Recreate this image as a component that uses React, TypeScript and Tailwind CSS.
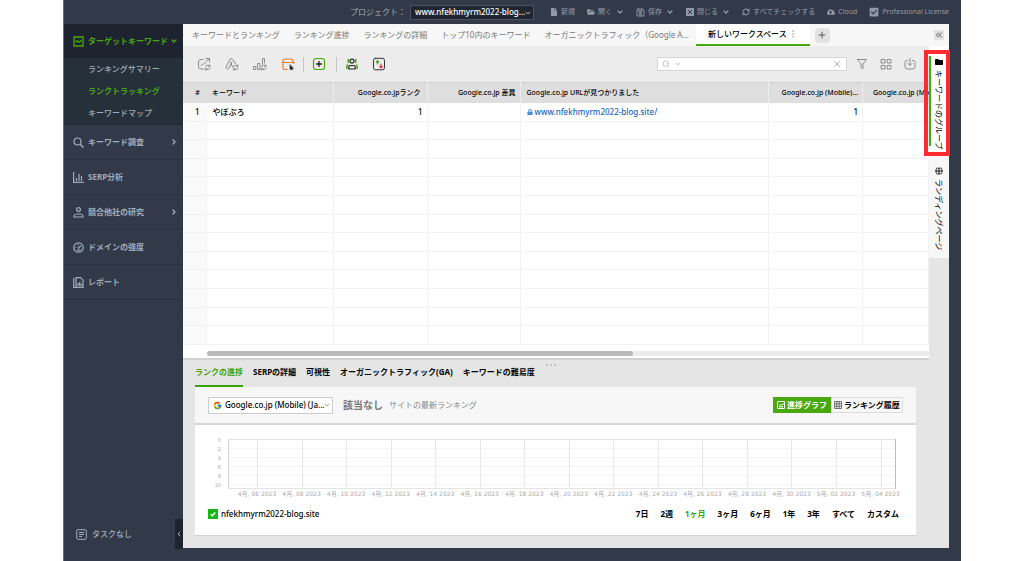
import type { ReactNode } from 'react';
import clsx from 'clsx';
import {
  FaCheckSquare,
  FaCloudUploadAlt,
  FaFile,
  FaFolder,
  FaFolderOpen,
  FaGlobe,
  FaLock,
  FaRegSave,
} from 'react-icons/fa';
import { FcGoogle } from 'react-icons/fc';
import {
  ChevronDown,
  ChevronLeft,
  ChevronRight,
  ChevronsLeft,
  EllipsisVertical,
  Plus,
  RefreshCw,
  Search,
  X,
} from 'lucide-react';

const workspaceTabs = [
  'キーワードとランキング',
  'ランキング進捗',
  'ランキングの詳細',
  'トップ10内のキーワード',
  'オーガニックトラフィック（Google A...',
];

const subItems = ['ランキングサマリー', 'ランクトラッキング', 'キーワードマップ'];

const detailTabs = [
  'ランクの進捗',
  'SERPの詳細',
  '可視性',
  'オーガニックトラフィック(GA)',
  'キーワードの難易度',
];

const periods = ['7日', '2週', '1ヶ月', '3ヶ月', '6ヶ月', '1年', '3年', 'すべて', 'カスタム'];

const chartDates = [
  '4月, 06 2023',
  '4月, 08 2023',
  '4月, 10 2023',
  '4月, 12 2023',
  '4月, 14 2023',
  '4月, 16 2023',
  '4月, 18 2023',
  '4月, 20 2023',
  '4月, 22 2023',
  '4月, 24 2023',
  '4月, 26 2023',
  '4月, 28 2023',
  '4月, 30 2023',
  '5月, 02 2023',
  '5月, 04 2023',
];

const emptyRows = Array.from({ length: 12 }, (_, i) => i);

export default function App() {
  return (
    <div className="min-h-screen bg-white px-[63px] font-['Noto_Sans','Noto_Sans_CJK_JP',sans-serif] text-[8px] leading-3 text-black">
      <div className="flex min-h-screen flex-col border-l border-[#68707c] bg-[#323a49]">
        <TopBar />
        <div className="flex flex-1 pr-3">
          <Sidebar />
          <div className="mb-[13px] flex min-w-0 flex-1 flex-col bg-[#e5e5e5]">
            <WorkspaceTabs />
            <div className="flex flex-1">
              <main className="flex min-w-0 flex-1 flex-col">
                <Toolbar />
                <KeywordTable />
                <DetailPanel />
              </main>
              <Rail />
            </div>
          </div>
        </div>
      </div>
    </div>
  );
}

const TopBar = () => {
  return (
    <header className="flex h-6 items-center justify-end gap-3 pr-3 text-[7px] whitespace-nowrap text-[#929aa7]">
      <div className="mr-1 flex items-center gap-1">
        <label htmlFor="project" className="text-[8px] text-[#a9b0bb]">
          プロジェクト：
        </label>
        <div className="relative w-31">
          <select
            id="project"
            className="block h-[15px] w-full appearance-none border border-[#4a5361] bg-[#1f2632] pl-1 text-[8px] leading-3 font-medium text-white"
          >
            <option>www.nfekhmyrm2022-blog...</option>
          </select>
          <ChevronDown className="pointer-events-none absolute top-1 right-0.5 size-2 text-white" />
        </div>
      </div>
      <MenuButton icon={<FaFile className="size-2" />} label="新規" />
      <MenuButton icon={<FaFolderOpen className="size-2" />} label="開く" hasMenu />
      <MenuButton icon={<FaRegSave className="size-[9px]" />} label="保存" hasMenu />
      <MenuButton
        icon={
          <svg viewBox="0 0 8 8" className="size-2" fill="none" stroke="currentColor">
            <path d="M0 0h8v8h-8z" fill="currentColor" stroke="none" />
            <path d="M2 2l4 4M6 2l-4 4" stroke="#323a49" />
          </svg>
        }
        label="閉じる"
        hasMenu
      />
      <MenuButton
        icon={<RefreshCw className="size-2" strokeWidth={3} />}
        label="すべてチェックする"
      />
      <MenuButton icon={<FaCloudUploadAlt className="size-2" />} label="Cloud" />
      <MenuButton icon={<FaCheckSquare className="size-2.5" />} label="Professional License" />
    </header>
  );
};

const MenuButton = (props: { icon: ReactNode; label: string; hasMenu?: boolean }) => {
  return (
    <button type="button" className="flex items-center">
      {props.icon}
      <span className="ml-[3px]">{props.label}</span>
      {props.hasMenu && <ChevronDown className="ml-1 size-2" strokeWidth={4} />}
    </button>
  );
};

const Sidebar = () => {
  return (
    <nav className="flex w-[119px] shrink-0 flex-col font-medium text-[#a3adba]">
      <a href="#target" className="flex h-[34px] items-center bg-[#1d232f] pl-[9px] text-[#4aa80f]">
        <svg viewBox="0 0 11 11" className="size-[11px]" fill="none" stroke="currentColor" strokeWidth="1.300">
          <path d="M1 1h9v9h-9z" />
          <path d="M2.500 6.200l1.500-1.500 2 1.500 2.500-1.800" />
        </svg>
        <span className="ml-1 font-bold">ターゲットキーワード</span>
        <ChevronDown className="ml-0.5 size-2" strokeWidth={4} />
      </a>
      <ul className="border-b border-[#1f2731] bg-[#26303b]">
        {subItems.map((item, i) => (
          <li key={item}>
            <a
              href="#sub"
              className={clsx('flex h-[22px] items-center pl-6', i === 1 && 'font-bold text-[#4aa80f]')}
            >
              {item}
            </a>
          </li>
        ))}
      </ul>
      <SideItem label="キーワード調査" hasMenu>
        <circle cx="4.500" cy="4.500" r="3.500" />
        <path d="M7 7l3.500 3.500" strokeWidth="1.500" />
      </SideItem>
      <SideItem label="SERP分析">
        <path d="M.600 0v10.400h10.400M3.500 6v3M6 2v7M8.500 4v5" />
      </SideItem>
      <SideItem label="競合他社の研究" hasMenu>
        <circle cx="5.500" cy="2.500" r="1.900" />
        <path d="M1 10v-1q.300-2 2.500-2h4q2.200 0 2.500 2v1z" />
      </SideItem>
      <SideItem label="ドメインの強度">
        <circle cx="5.500" cy="5.500" r="4.700" />
        <path d="M5 6.500l3-2.800M2.500 5.500h1M5 2.500v1M4 8.200h3.500" />
      </SideItem>
      <SideItem label="レポート">
        <path d="M.700 1v9.300h2M3 .700h4.500l2.500 2.500v7.100h-7zM5 6v3M6.700 5v4M8.300 6.500v2.500" />
      </SideItem>
      <div className="mt-auto mb-3 flex h-[30px] items-center justify-between pl-3">
        <a href="#tasks" className="flex items-center gap-[5px]">
          <svg viewBox="0 0 11 11" className="size-[11px]" fill="none" stroke="currentColor">
            <rect x=".700" y=".700" width="9.600" height="9.600" rx="1" />
            <path d="M3 3.500h5M3 5.500h5M3 7.500h3" />
          </svg>
          タスクなし
        </a>
        <button
          type="button"
          aria-label="collapse"
          className="flex h-full w-2 items-center justify-center bg-[#1d232f]"
        >
          <ChevronLeft className="size-2" strokeWidth={3} />
        </button>
      </div>
    </nav>
  );
};

const SideItem = (props: { label: string; hasMenu?: boolean; children: ReactNode }) => {
  return (
    <a href="#item" className="flex h-[35px] items-center border-b border-[#2a323f] pr-[5px] pl-[9px]">
      <svg viewBox="0 0 11 11" className="size-[11px]" fill="none" stroke="currentColor" strokeWidth="1.200">
        {props.children}
      </svg>
      <span className="ml-1 font-bold">{props.label}</span>
      {props.hasMenu && <ChevronRight className="ml-auto size-2" strokeWidth={4} />}
    </a>
  );
};

const WorkspaceTabs = () => {
  return (
    <div className="flex h-[22px] items-stretch bg-[#f7f7f7] pl-[9px] whitespace-nowrap text-[#777]">
      <div className="flex gap-3.5">
        {workspaceTabs.map((tab) => (
          <button key={tab} type="button">
            {tab}
          </button>
        ))}
      </div>
      <button
        type="button"
        className="ml-[7px] flex w-[114px] items-center border-b-2 border-[#4aa80f] bg-white pl-3 font-medium text-black"
      >
        新しいワークスペース
        <EllipsisVertical className="ml-px size-2.5 text-[#aaa]" />
      </button>
      <button
        type="button"
        aria-label="add workspace"
        className="ml-[5px] flex size-[15px] items-center justify-center self-center rounded-sm bg-[#e2e2e2] text-[#444]"
      >
        <Plus className="size-2.5" />
      </button>
      <button
        type="button"
        aria-label="hide panel"
        className="mr-[5px] ml-auto flex size-2.5 items-center justify-center self-center bg-[#e2e2e2] text-[#333]"
      >
        <ChevronsLeft className="size-2.5" />
      </button>
    </div>
  );
};

const ToolIcon = (props: { label: string; color?: string; children: ReactNode }) => {
  return (
    <button type="button" aria-label={props.label} className={props.color ?? 'text-[#8c8c8c]'}>
      <svg
        viewBox="0 0 14 14"
        className="size-3.5"
        fill="none"
        stroke="currentColor"
        strokeLinecap="round"
        strokeLinejoin="round"
      >
        {props.children}
      </svg>
    </button>
  );
};

// small recheck arrows in the corner of the first three tools
const Recheck = () => (
  <path d="M8.500 9.800a2.300 2.300 0 0 1 4-.800M12.900 7.800v1.600h-1.600M13 11a2.300 2.300 0 0 1-4 .900M8.500 13.200v-1.500h1.600" />
);

const Toolbar = () => {
  return (
    <div className="flex h-9 items-center bg-[#ececec] pr-3 pl-3.5 text-[#888]">
      <div className="flex gap-3.5">
        <ToolIcon label="check ranking">
          <path d="M6 2.500h-2q-2.500 0-2.500 2.500v4.500q0 2.500 2.500 2.500h2.500M4 8.500q1-1.500 2.500-1.500t2-1.500 3.500-3.500M9 1.500h3.500v3.500" />
          <Recheck />
        </ToolIcon>
        <ToolIcon label="check visibility">
          <path d="M6.500 1.500q-1.500 0-2 1.500l-3.500 7q0 1.500 1.500 2 1 0 1.500-1l3-6M6.500 1.500q1 0 1.500 1.200l2.500 4M5.500 5l2 5" />
          <Recheck />
        </ToolIcon>
        <ToolIcon label="check difficulty">
          <path d="M.800 9.500h2v3h-2zM5 6.500h2v6h-2zM9.500 7v-5.500h2v4.500" />
          <Recheck />
        </ToolIcon>
        <ToolIcon label="schedule" color="text-[#f57c1f]">
          <path
            d="M6.500 12.500h-2.500q-2 0-2-2v-4M2 4.500v-.500q0-2 2-2h6q2 0 2 2v.500M.800 5.500h12.400M12.500 5.500v1"
            strokeWidth="1.200"
          />
          <path
            d="M9 8v4.500l1-.800.700 1.300.900-.500-.700-1.300h1.300z"
            fill="#222"
            stroke="#222"
            strokeWidth=".600"
          />
        </ToolIcon>
      </div>
      <span className="mx-2 h-[15px] w-px bg-[#c4c4c4]" />
      <ToolIcon label="add" color="text-[#4aa80f]">
        <rect x="1.500" y="1.500" width="11" height="11" rx="2.500" strokeWidth="1.200" />
        <path d="M7 4.500v5M4.500 7h5" stroke="#222" strokeWidth="1.300" />
      </ToolIcon>
      <span className="mr-2 ml-2.5 h-[15px] w-px bg-[#c4c4c4]" />
      <div className="flex gap-[13px]">
        <ToolIcon label="competitors" color="text-[#4aa80f]">
          <path
            d="M3.200 2.500v3M10.800 2.500v3M1.800 11.500v-2q0-1 1-1.500M12.200 11.500v-2q0-1-1-1.500"
            strokeWidth="1.500"
          />
          <circle cx="7" cy="4.200" r="2" stroke="#222" strokeWidth="1.200" />
          <path d="M3.800 12v-1.500q0-2 2-2h2.400q2 0 2 2v1.500z" stroke="#222" strokeWidth="1.200" />
        </ToolIcon>
        <ToolIcon label="move" color="text-[#333]">
          <rect x="1.500" y="1.300" width="11" height="11.500" rx="2" />
          <path d="M5.500 7v-3M4.300 5l1.200-1.300 1.200 1.300" stroke="#4aa80f" strokeWidth="1.200" />
          <path d="M9 7v3.500M7.700 9.500l1.300 1.300 1.300-1.300" stroke="#e33" strokeWidth="1.200" />
        </ToolIcon>
      </div>
      <div className="mr-2 ml-auto flex h-3.5 w-[190px] items-center border border-[#d6d6d6] bg-white px-1 text-[#aaa]">
        <Search className="size-2" />
        <ChevronDown className="ml-1 size-2" />
        <input type="search" aria-label="search" className="min-w-0 flex-1 outline-none" />
        <X className="size-2.5" />
      </div>
      <div className="flex items-center gap-2.5">
        <ToolIcon label="filter">
          <path d="M2.500 2.500h9l-3.500 4.500v4.500l-2 -1v-3.500z" />
        </ToolIcon>
        <ToolIcon label="columns">
          <path d="M2.500 2.500h3.500v3.500h-3.500zM8.500 2.500h3.500v3.500h-3.500zM2.500 8.500h3.500v3.500h-3.500zM8.500 8.500h3.500v3.500h-3.500z" />
        </ToolIcon>
        <ToolIcon label="export">
          <path d="M4.500 3.500h-.500q-2 0-2 2v4q0 2.500 2.500 2.500h5q2.500 0 2.500-2.500v-4q0-2-2-2h-.500M7 1.500v6.500M5 6.500l2 2 2-2" />
        </ToolIcon>
      </div>
    </div>
  );
};

const KeywordTable = () => {
  return (
    <section className="border-b-2 border-[#d2d2d2] bg-white">
      <table className="h-[263px] w-full table-fixed border-collapse whitespace-nowrap">
        <colgroup>
          <col className="w-[23px]" />
          <col className="w-[127px]" />
          <col className="w-[94px]" />
          <col className="w-[93px]" />
          <col />
          <col className="w-[94px]" />
          <col className="w-[66px]" />
        </colgroup>
        <thead>
          <tr className="h-5 border-t border-[#d0d0d0] bg-[#dedede] text-[7px] *:font-medium">
            <th className="pl-1.5">#</th>
            <th className="border-r border-[#eee] pl-1.5 text-left">キーワード</th>
            <th className="border-r border-[#eee] pr-1.5 text-right">Google.co.jpランク</th>
            <th className="border-r border-[#eee] pr-1 text-right">Google.co.jp 差異</th>
            <th className="border-r border-[#eee] pl-1.5 text-left">
              Google.co.jp URLが見つかりました
            </th>
            <th className="border-r border-[#eee] pr-1 text-right">Google.co.jp (Mobile)...</th>
            <th className="pl-2.5 text-left">Google.co.jp (Mo</th>
          </tr>
        </thead>
        <tbody>
          <tr className="h-[18px] border-b border-[#f2f2f2] *:border-r *:border-[#f2f2f2]">
            <td className="bg-[#fafafa] pl-1.5 text-center font-medium">1</td>
            <td className="pl-1.5 font-medium">やぼぷろ</td>
            <td className="pr-1 text-right font-medium">1</td>
            <td></td>
            <td className="pl-1.5 font-medium">
              <a href="#site" className="flex items-center gap-0.5 text-[#1766b8]">
                <FaLock className="size-1.5 text-[#4a90d9]" />
                www.nfekhmyrm2022-blog.site/
              </a>
            </td>
            <td className="pr-1 text-right font-medium">1</td>
            <td></td>
          </tr>
          {emptyRows.map((row) => (
            <tr key={row} className="h-[18px] border-b border-[#f2f2f2] *:border-r *:border-[#f2f2f2]">
              <td className="bg-[#fafafa]"></td>
              <td></td>
              <td></td>
              <td></td>
              <td></td>
              <td></td>
              <td></td>
            </tr>
          ))}
        </tbody>
      </table>
      <div className="pt-1.5 pb-0.5 pl-6">
        <div className="h-[5px] rounded-full bg-[#ececec]">
          <div className="h-full w-[59%] rounded-full bg-[#bababa]" />
        </div>
      </div>
    </section>
  );
};

const DetailPanel = () => {
  return (
    <section className="relative flex-1 pr-[13px] pl-3">
      <span className="absolute top-1 left-1/2 flex -translate-x-2.5 gap-0.5">
        <i className="size-0.5 rounded-full bg-[#b8b8b8]" />
        <i className="size-0.5 rounded-full bg-[#b8b8b8]" />
        <i className="size-0.5 rounded-full bg-[#b8b8b8]" />
      </span>
      <div className="flex h-[27px] gap-2.5 font-bold whitespace-nowrap">
        {detailTabs.map((tab, i) => (
          <button
            key={tab}
            type="button"
            className={clsx(
              'border-b-2 pb-0.5',
              i === 0 ? 'border-[#3aa30c] text-[#3aa30c]' : 'border-transparent',
            )}
          >
            {tab}
          </button>
        ))}
      </div>
      <div className="border-b border-[#cfcfcf] bg-white">
        <div className="flex h-[38px] items-center border-b-2 border-[#d6d6d6] bg-[#f7f7f7] px-[13px] whitespace-nowrap">
          <div className="relative w-[125px]">
            <select
              aria-label="search engine"
              className="block h-[17px] w-full appearance-none border border-[#cdcdcd] bg-white pl-4 text-[8px] leading-3 font-medium"
            >
              <option>Google.co.jp (Mobile) (Ja...</option>
            </select>
            <FcGoogle className="pointer-events-none absolute top-1 left-[5px] size-[9px]" />
            <ChevronDown className="pointer-events-none absolute top-1 right-0.5 size-2 text-[#777]" />
          </div>
          <strong className="ml-2.5 text-[10px] font-bold text-[#777]">該当なし</strong>
          <span className="ml-1.5 text-[#8a8a8a]">サイトの最新ランキング</span>
          <div className="ml-auto flex h-4 font-bold">
            <button
              type="button"
              className="flex w-[58px] items-center justify-center gap-0.5 bg-[#4aa80f] text-white"
            >
              <svg viewBox="0 0 8 8" className="size-2" fill="none" stroke="currentColor">
                <path d="M.500 .500h7v7h-7zM2 3.500l1.200 1 1.300-1 1 .500 1-1.500M2 5.800h4" />
              </svg>
              進捗グラフ
            </button>
            <button
              type="button"
              className="flex w-[72px] items-center justify-center gap-0.5 border border-[#dcdcdc]"
            >
              <svg viewBox="0 0 8 8" className="size-2" fill="none" stroke="#555" strokeWidth=".800">
                <path d="M.500 .500h7v7h-7zM.500 2.800h7M.500 5.200h7M2.800 .500v7M5.200 .500v7" />
              </svg>
              ランキング履歴
            </button>
          </div>
        </div>
        <div className="px-3 pt-[11px]">
          <RankChart />
        </div>
        <div className="mt-2.5 flex items-center justify-between px-[13px] pb-[15px] whitespace-nowrap">
          <label className="flex items-center gap-[3px] font-medium">
            <input type="checkbox" defaultChecked className="size-2.5 appearance-none bg-[#18b518]" />
            <svg viewBox="0 0 10 10" className="absolute size-2.5" fill="none" stroke="white" strokeWidth="1.500">
              <path d="M2.800 5.200l1.500 1.500 3-3.200" />
            </svg>
            nfekhmyrm2022-blog.site
          </label>
          <div className="flex gap-3 pr-1 font-bold">
            {periods.map((period) => (
              <button key={period} type="button" className={clsx(period === '1ヶ月' && 'text-[#3aa30c]')}>
                {period}
              </button>
            ))}
          </div>
        </div>
      </div>
    </section>
  );
};

const RankChart = () => {
  return (
    <svg viewBox="0 0 697 62" className="w-full" fill="#aaa">
      {[0, 2, 4, 6, 8, 10].map((rank, i) => (
        <g key={rank}>
          <path d={`M21 ${3.5 + i * 9}h667`} stroke="#f4f4f4" />
          <text
            x="14"
            y={6 + i * 9}
            fontSize="5"
            textAnchor="end"
            className="font-['DejaVu_Sans',sans-serif]"
          >
            {rank}
          </text>
        </g>
      ))}
      <path d="M21 3.500h667M21 52.500h667" stroke="#e4e4e4" />
      {chartDates.map((date, i) => (
        <g key={date}>
          <path d={`M${Math.round(50 + i * 44.54) + 0.5} 3v50`} stroke="#e8e8e8" />
          <text
            x={50 + i * 44.54}
            y="60"
            fontSize="6"
            textAnchor="middle"
            className="font-['DejaVu_Sans','Noto_Sans_CJK_JP',sans-serif]"
          >
            {date}
          </text>
        </g>
      ))}
      <path d="M21.500 3v50" stroke="#d0d0d0" />
      <path d="M688.500 3v50" stroke="#bbb" />
    </svg>
  );
};

const Rail = () => {
  return (
    <aside className="w-5 shrink-0 whitespace-nowrap">
      <div className="relative h-[212px] bg-[#f7f7f7]">
        <button
          type="button"
          className="flex h-[108px] w-full items-center gap-1 bg-white pt-3 [text-orientation:sideways] [writing-mode:vertical-rl]"
        >
          <FaFolder className="size-2" />
          キーワードのグループ
        </button>
        <button
          type="button"
          className="flex w-full items-center gap-1 pt-[13px] [text-orientation:sideways] [writing-mode:vertical-rl]"
        >
          <FaGlobe className="size-2 text-[#444]" />
          ランディングページ
        </button>
        <span className="absolute top-2.5 left-0 h-[90px] w-0.5 bg-[#4aa80f]" />
        <span className="absolute top-1 -right-px -left-[5px] h-[106px] border-4 border-[#fb2c2f]" />
      </div>
    </aside>
  );
};
